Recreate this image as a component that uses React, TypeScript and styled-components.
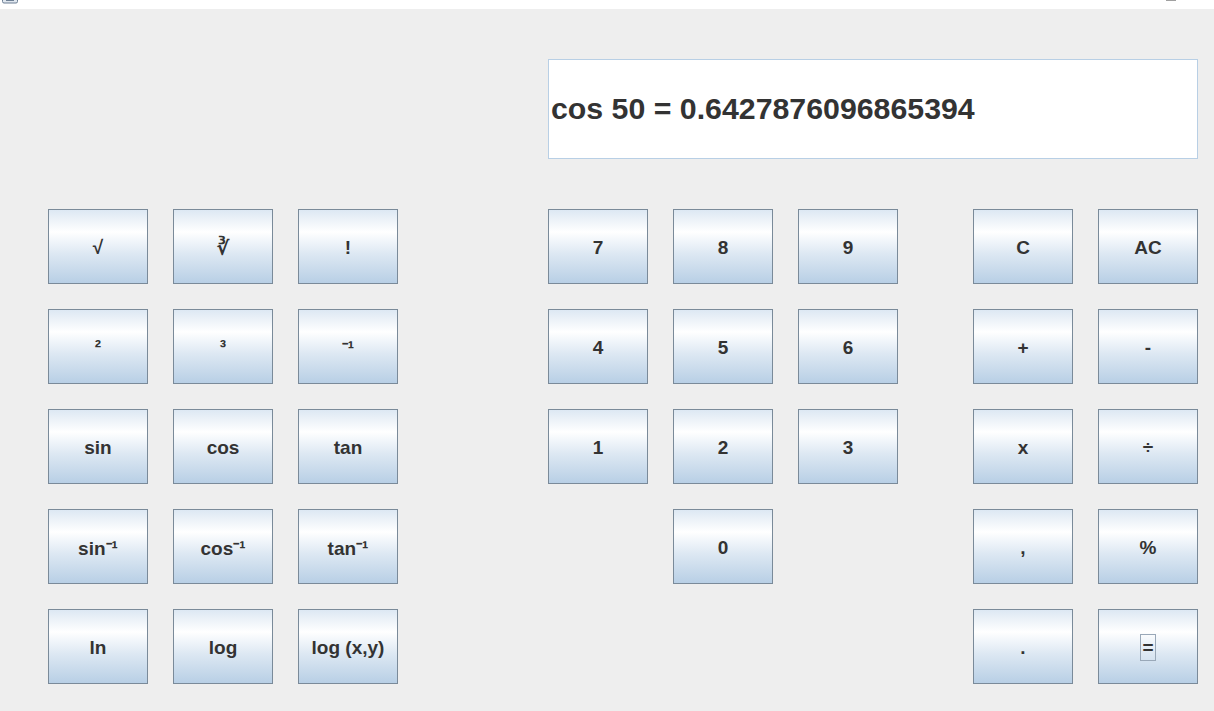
import styled, { createGlobalStyle } from 'styled-components';

const GlobalStyle = createGlobalStyle`
	html, body {
		margin: 0;
		padding: 0;
		background: #eeeeee;
	}
	body {
		font-family: "Liberation Sans", Arial, sans-serif;
	}
`;

const Window = styled.div`
	width: 1214px;
	height: 711px;
	display: flex;
	flex-direction: column;
	background: #eeeeee;
	overflow: hidden;
`;

const TitleStrip = styled.div`
	height: 9px;
	background: #ffffff;
	display: flex;
	justify-content: space-between;
	align-items: flex-start;
	padding: 0 36px 0 2px;
	flex-shrink: 0;
`;

const Content = styled.div`
	display: flex;
	flex-direction: column;
	padding: 50px 0 0 48px;
	gap: 50px;
`;

const DisplayRow = styled.div`
	display: flex;
	padding-left: 500px;
`;

const Display = styled.div`
	width: 646px;
	height: 98px;
	border: 1px solid #b8cfe5;
	background: #ffffff;
	display: flex;
	align-items: center;
	padding: 0 0 0 2px;
	box-sizing: content-box;
	font-size: 30.3px;
	font-weight: bold;
	color: #333333;
	white-space: nowrap;
`;

const Keypad = styled.div`
	display: flex;
	align-items: flex-start;
`;

const Group = styled.div<{ $cols: number; $gapAfter?: number }>`
	display: grid;
	grid-template-columns: repeat(${(p) => p.$cols}, 100px);
	grid-auto-rows: 75px;
	column-gap: 25px;
	row-gap: 25px;
	margin-right: ${(p) => p.$gapAfter ?? 0}px;
`;

const Key = styled.button<{ $col?: number }>`
	box-sizing: border-box;
	width: 100px;
	height: 75px;
	margin: 0;
	padding: 2px 0 0 0;
	border: 1px solid #7a8a99;
	border-radius: 0;
	background: linear-gradient(
		to bottom,
		#dde8f3 0%,
		#ffffff 30%,
		#dde8f3 60%,
		#b8cfe5 100%
	);
	font-family: "Liberation Sans", Arial, sans-serif;
	font-size: 19px;
	font-weight: bold;
	color: #333333;
	display: flex;
	align-items: center;
	justify-content: center;
	cursor: pointer;
	grid-column: ${(p) => (p.$col ? p.$col : 'auto')};
`;

const FocusLabel = styled.span`
	border: 1px solid #99a8b8;
	padding: 4px 1px;
	line-height: 17px;
`;

const scientific = [
	'√', '∛', '!',
	'²', '³', '⁻¹',
	'sin', 'cos', 'tan',
	'sin⁻¹', 'cos⁻¹', 'tan⁻¹',
	'ln', 'log', 'log (x,y)',
];

const digits = ['7', '8', '9', '4', '5', '6', '1', '2', '3'];

const operators = ['C', 'AC', '+', '-', 'x', '÷', ',', '%', '.'];

function App() {
	return (
		<>
			<GlobalStyle />
			<Window>
				<TitleStrip>
					<svg width="16" height="4" viewBox="0 0 16 4">
						<rect x="0.5" y="-3" width="15" height="6" rx="1.5" fill="#dfe6ee" stroke="#6d7f94" />
						<line x1="4" y1="0.5" x2="12" y2="0.5" stroke="#6d7f94" />
					</svg>
					<svg width="12" height="3" viewBox="0 0 12 3">
						<line x1="0" y1="0.5" x2="10" y2="0.5" stroke="#a0a0a0" />
					</svg>
				</TitleStrip>
				<Content>
					<DisplayRow>
						<Display>cos 50 = 0.6427876096865394</Display>
					</DisplayRow>
					<Keypad>
						<Group $cols={3} $gapAfter={150}>
							{scientific.map((label) => (
								<Key key={label}>{label}</Key>
							))}
						</Group>
						<Group $cols={3} $gapAfter={75}>
							{digits.map((d) => (
								<Key key={d}>{d}</Key>
							))}
							<Key $col={2}>0</Key>
						</Group>
						<Group $cols={2}>
							{operators.map((op) => (
								<Key key={op}>{op}</Key>
							))}
							<Key>
								<FocusLabel>=</FocusLabel>
							</Key>
						</Group>
					</Keypad>
				</Content>
			</Window>
		</>
	);
}

export default App;
